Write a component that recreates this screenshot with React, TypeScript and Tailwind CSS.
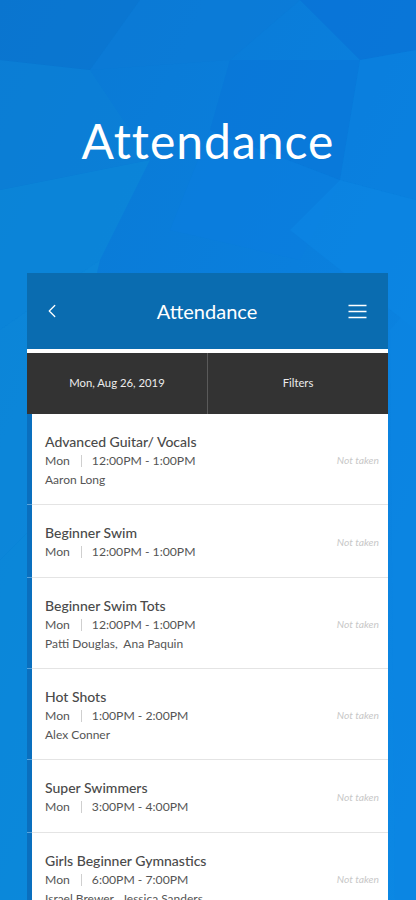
import { ChevronLeft } from "lucide-react";

type Session = {
  title: string;
  time: string;
  people?: string;
};

const SESSIONS: Session[] = [
  { title: "Advanced Guitar/ Vocals", time: "12:00PM - 1:00PM", people: "Aaron Long" },
  { title: "Beginner Swim", time: "12:00PM - 1:00PM" },
  { title: "Beginner Swim Tots", time: "12:00PM - 1:00PM", people: "Patti Douglas,\u00a0 Ana Paquin" },
  { title: "Hot Shots", time: "1:00PM - 2:00PM", people: "Alex Conner" },
  { title: "Super Swimmers", time: "3:00PM - 4:00PM" },
  { title: "Girls Beginner Gymnastics", time: "6:00PM - 7:00PM", people: "Israel Brewer,\u00a0 Jessica Sanders" },
];

function Backdrop() {
  // low-poly facets behind the page
  return (
    <svg className="absolute inset-0 w-full h-full" viewBox="0 0 416 900" preserveAspectRatio="none">
      <defs>
        <linearGradient id="bg" x1="0" y1="0" x2="1" y2="1">
          <stop offset="0" stopColor="#0a79d3" />
          <stop offset="0.5" stopColor="#0a7fdd" />
          <stop offset="1" stopColor="#0b88e4" />
        </linearGradient>
      </defs>
      <rect width="416" height="900" fill="url(#bg)" />
      <polygon points="0,0 140,0 90,70 0,60" fill="#0a72cc" opacity="0.5" />
      <polygon points="140,0 300,0 230,60 90,70" fill="#0b7ad6" opacity="0.5" />
      <polygon points="300,0 416,0 416,50 360,60" fill="#086fd6" opacity="0.6" />
      <polygon points="0,60 90,70 150,160 0,190" fill="#0b82d6" opacity="0.5" />
      <polygon points="0,190 150,160 100,260 0,330" fill="#0c8ad8" opacity="0.6" />
      <polygon points="230,60 360,60 340,180 210,130" fill="#0874d8" opacity="0.5" />
      <polygon points="360,60 416,50 416,200 340,180" fill="#0a80e0" opacity="0.5" />
      <polygon points="210,130 340,180 300,260 170,230" fill="#0a7ce0" opacity="0.4" />
      <polygon points="340,180 416,200 416,330 290,230" fill="#0b88e6" opacity="0.5" />
      <polygon points="0,330 100,260 40,520 0,560" fill="#0d90da" opacity="0.5" />
      <polygon points="0,560 40,520 30,900 0,900" fill="#0c8ed8" opacity="0.6" />
      <polygon points="390,330 416,300 416,900 395,900" fill="#0b86e2" opacity="0.6" />
    </svg>
  );
}

function SessionRow({ s }: { s: Session }) {
  return (
    <div className={s.people ? "flex h-[91px]" : "flex h-[73px]"}>
      <div className="w-[5px] shrink-0 bg-[#0a6fbe] border-b border-[#5aa4dc]" />
      <div className="flex-1 flex bg-white border-b border-[#e4e4e4] pl-[13px] pr-[9px]">
        <div className="flex-1 min-w-0 pt-[18px]">
          <p className="text-[14px] leading-[19px] font-medium text-[#4a4a4a]">{s.title}</p>
          <div className="flex items-center text-[12.2px] leading-[19px] text-[#555]">
            <span>Mon</span>
            <span className="w-px h-[12px] bg-[#cfcfcf] ml-[11px] mr-[10px]" />
            <span>{s.time}</span>
          </div>
          {s.people && <p className="text-[12px] leading-[19px] text-[#555]">{s.people}</p>}
        </div>
        <span className="self-center pt-[4px] text-[10.3px] italic text-[#c8c8c8]">Not taken</span>
      </div>
    </div>
  );
}

export default function App() {
  return (
    <div className="relative w-full h-[900px] overflow-hidden font-['Lato','Noto_Sans',sans-serif]">
      <Backdrop />

      <div className="relative">
        {/* Hero title */}
        <h1 className="pt-[112px] text-center text-[48px] leading-[58px] tracking-[1px] text-white">Attendance</h1>

        {/* Phone card */}
        <div className="mt-[103px] ml-[27px] mr-[28px] flex flex-col">
          <header className="h-[76px] bg-[#0a6cb0] flex items-center px-[17px] text-white">
            <ChevronLeft className="w-[22px] h-[22px] -ml-[3px]" strokeWidth={1.4} />
            <span className="flex-1 text-center text-[20px] pl-[3px]">Attendance</span>
            <svg width="19" height="15" viewBox="0 0 19 15" className="mr-[4px]">
              <path d="M0.5 1.5h18M0.5 7.5h18M0.5 13.5h18" stroke="white" strokeWidth="1.6" />
            </svg>
          </header>
          <div className="h-[4px] bg-white" />
          <div className="h-[61px] bg-[#333333] flex text-[11.3px] text-[#ececec]">
            <div className="flex-1 flex items-center justify-center border-r border-[#5a5a5a]">Mon, Aug 26, 2019</div>
            <div className="flex-1 flex items-center justify-center">Filters</div>
          </div>

          {SESSIONS.map(s => (
            <SessionRow key={s.title} s={s} />
          ))}
        </div>
      </div>
    </div>
  );
}
